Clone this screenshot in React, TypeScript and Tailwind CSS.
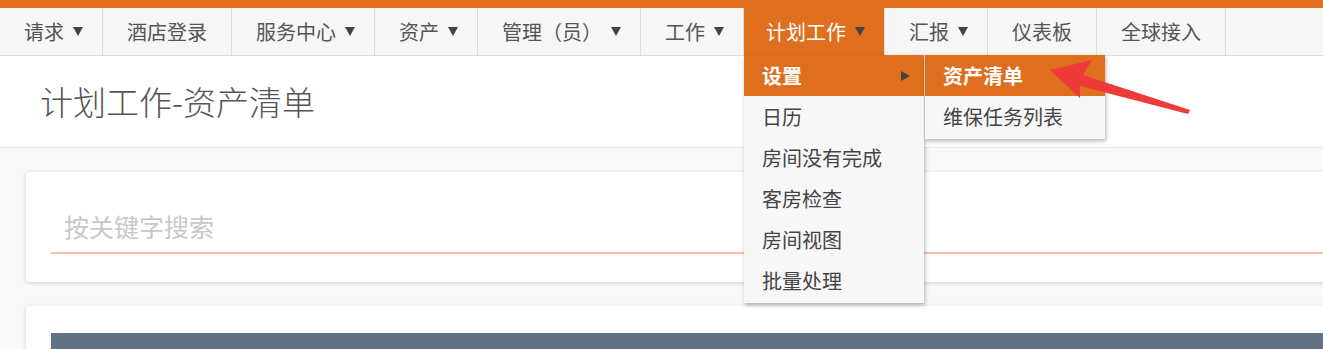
import React from "react";

type NavItem = { label: string; caret?: boolean; active?: boolean };

const navItems: NavItem[] = [
  { label: "请求", caret: true },
  { label: "酒店登录" },
  { label: "服务中心", caret: true },
  { label: "资产", caret: true },
  { label: "管理（员）", caret: true },
  { label: "工作", caret: true },
  { label: "计划工作", caret: true, active: true },
  { label: "汇报", caret: true },
  { label: "仪表板" },
  { label: "全球接入" },
];

const menuItems = ["日历", "房间没有完成", "客房检查", "房间视图", "批量处理"];

function Caret() {
  return (
    <span className="ml-[9px] inline-block h-0 w-0 border-x-[5px] border-t-[9px] border-x-transparent border-t-[#444]" />
  );
}

function Dropdown() {
  return (
    <div className="absolute left-0 top-[47px] z-10 flex">
      <div className="w-[180px] bg-[#f7f7f7] pb-[2px] shadow-[1px_2px_4px_rgba(0,0,0,0.3)]">
        <div className="flex h-[41px] items-center justify-between bg-[#e06e1f] pl-[18px] pr-[14px] font-bold text-white">
          <span>设置</span>
          <span className="inline-block h-0 w-0 border-y-[5px] border-l-[9px] border-y-transparent border-l-[#444]" />
        </div>
        {menuItems.map((m) => (
          <div key={m} className="flex h-[41px] items-center pl-[18px] text-[#444]">
            {m}
          </div>
        ))}
      </div>
      <div className="ml-[1px] h-fit w-[180px] bg-[#f7f7f7] pb-[2px] shadow-[1px_2px_4px_rgba(0,0,0,0.3)]">
        <div className="flex h-[41px] items-center bg-[#e06e1f] pl-[18px] font-bold text-white">资产清单</div>
        <div className="flex h-[41px] items-center pl-[18px] text-[#444]">维保任务列表</div>
      </div>
    </div>
  );
}

export default function App() {
  return (
    <div
      className="relative h-[349px] w-[1323px] overflow-hidden bg-[#f9f9f9] text-[20px]"
      style={{ fontFamily: '"Noto Sans CJK SC", "Noto Sans", sans-serif' }}
    >
      <div className="h-[8px] bg-[#e06e1f]" />
      <nav className="flex h-[48px] border-b border-[#dcdcdc] bg-[#f6f6f6]">
        {navItems.map((item) => (
          <div
            key={item.label}
            className={
              item.active
                ? "relative flex items-center border-r border-[#dcdcdc] bg-[#e06e1f] pl-[22px] pr-[19px] text-white"
                : "flex items-center border-r border-[#dcdcdc] pl-[24px] pr-[19px] text-[#555]"
            }
          >
            <span className="leading-none">{item.label}</span>
            {item.caret ? <Caret /> : <span className="w-[5px]" />}
            {item.active && <Dropdown />}
          </div>
        ))}
      </nav>

      <header className="flex h-[92px] items-center border-b border-[#e6e6e6] bg-white pl-[40px]">
        <h1 className="text-[33px] font-light text-[#555]">计划工作-资产清单</h1>
      </header>

      <main className="flex flex-col gap-[24px] pl-[26px] pt-[24px]">
        <div className="w-[1340px] shrink-0 rounded-[4px] bg-white px-[25px] pb-[28px] pt-[28px] shadow-[0_1px_4px_rgba(0,0,0,0.18)]">
          <input
            className="h-[54px] w-full border-b-[2px] border-[#ffbfa3] bg-transparent pl-[13px] text-[25px] outline-none placeholder:text-[#c8c8c8]"
            placeholder="按关键字搜索"
          />
        </div>
        <div className="w-[1340px] shrink-0 rounded-[4px] bg-white px-[25px] pt-[27px] shadow-[0_1px_4px_rgba(0,0,0,0.18)]">
          <div className="h-[60px] bg-[#627283]" />
        </div>
      </main>

      <svg className="pointer-events-none absolute left-0 top-0 z-20" width="1323" height="349">
        <polygon
          points="1050,70 1092,60 1083,75 1190,110 1188,114 1080,86 1080,98"
          fill="#ef3a3a"
        />
      </svg>
    </div>
  );
}
